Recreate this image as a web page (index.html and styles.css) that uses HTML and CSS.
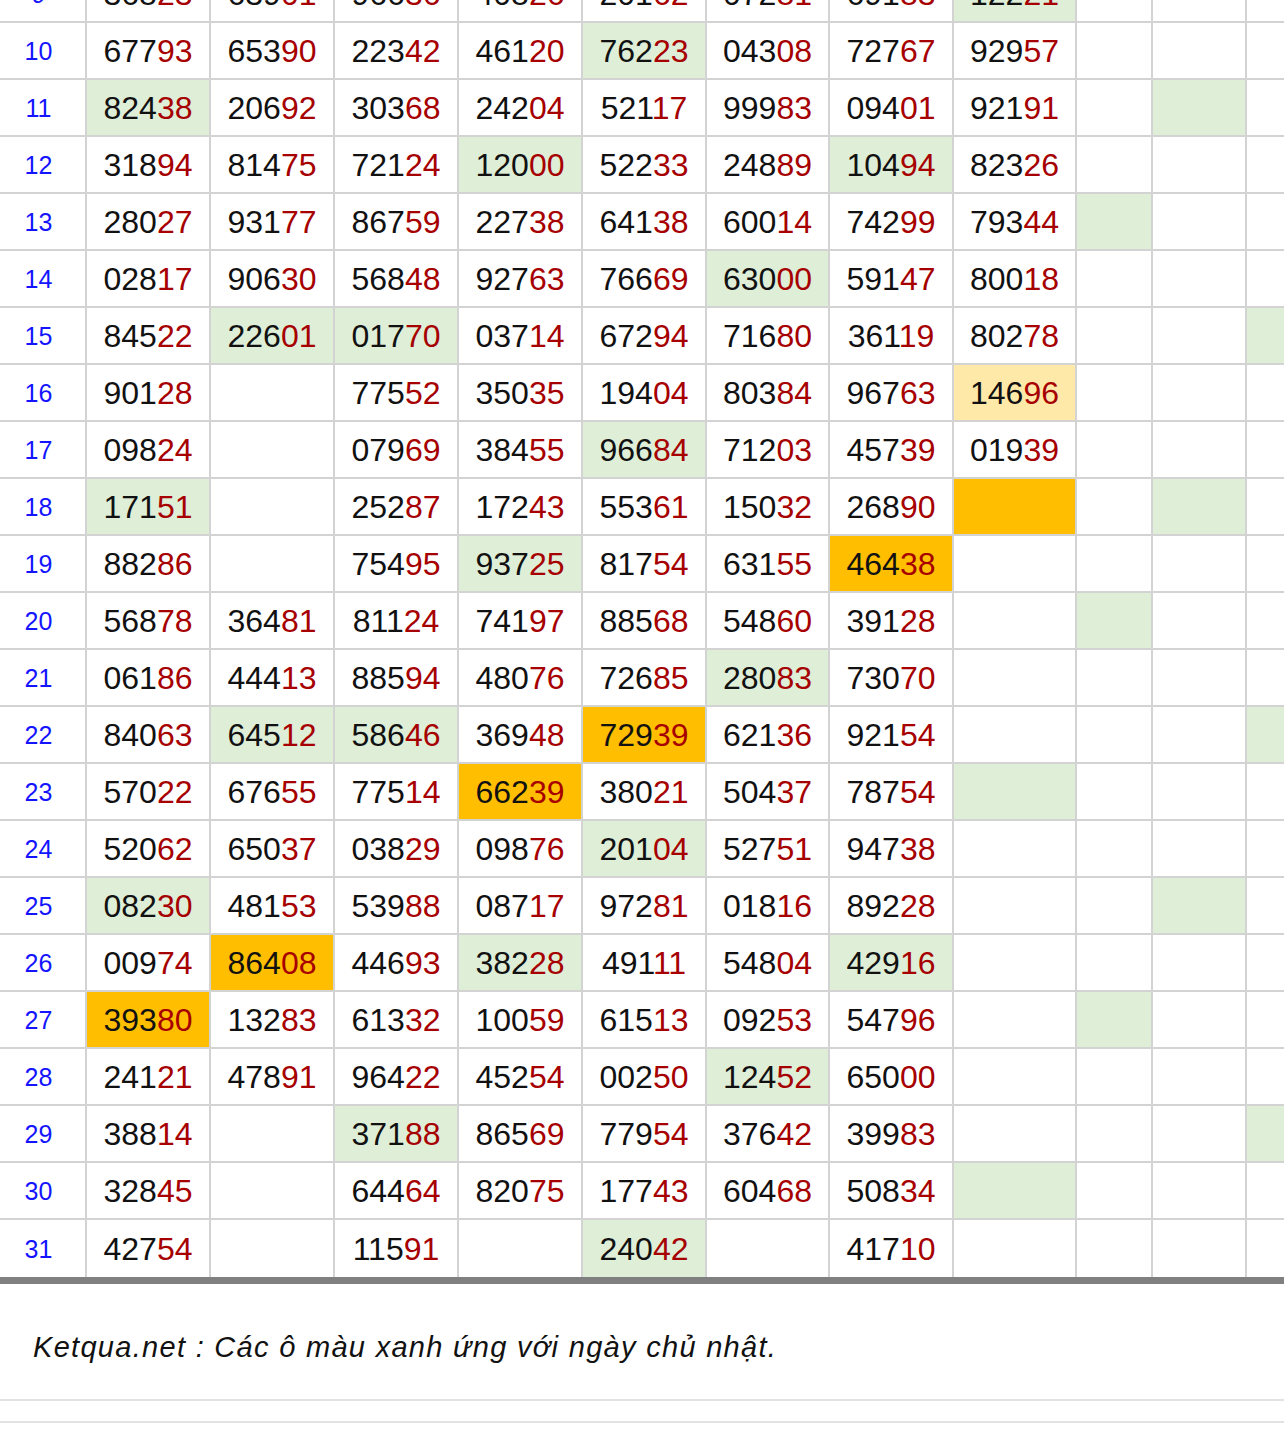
FILE: index.html
```html
<!DOCTYPE html>
<html lang="vi">
<head>
<meta charset="utf-8">
<title>Ketqua.net</title>
<link rel="stylesheet" href="styles.css">
</head>
<body>
<div class="wrap">
<table class="kq">
<colgroup>
<col class="w-day"><col class="w124"><col class="w124"><col class="w124"><col class="w124"><col class="w124"><col class="w123"><col class="w124"><col class="w123"><col class="w76"><col class="w94"><col class="w124">
</colgroup>
<tbody>
<tr><td class="d">9</td><td>368<span class="r">23</span></td><td>639<span class="r">01</span></td><td>966<span class="r">36</span></td><td>408<span class="r">26</span></td><td>201<span class="r">62</span></td><td>072<span class="r">81</span></td><td>691<span class="r">83</span></td><td class="g">122<span class="r">21</span></td><td></td><td></td><td></td></tr>
<tr><td class="d">10</td><td>677<span class="r">93</span></td><td>653<span class="r">90</span></td><td>223<span class="r">42</span></td><td>461<span class="r">20</span></td><td class="g">762<span class="r">23</span></td><td>043<span class="r">08</span></td><td>727<span class="r">67</span></td><td>929<span class="r">57</span></td><td></td><td></td><td></td></tr>
<tr><td class="d">11</td><td class="g">824<span class="r">38</span></td><td>206<span class="r">92</span></td><td>303<span class="r">68</span></td><td>242<span class="r">04</span></td><td>521<span class="r">17</span></td><td>999<span class="r">83</span></td><td>094<span class="r">01</span></td><td>921<span class="r">91</span></td><td></td><td class="g"></td><td></td></tr>
<tr><td class="d">12</td><td>318<span class="r">94</span></td><td>814<span class="r">75</span></td><td>721<span class="r">24</span></td><td class="g">120<span class="r">00</span></td><td>522<span class="r">33</span></td><td>248<span class="r">89</span></td><td class="g">104<span class="r">94</span></td><td>823<span class="r">26</span></td><td></td><td></td><td></td></tr>
<tr><td class="d">13</td><td>280<span class="r">27</span></td><td>931<span class="r">77</span></td><td>867<span class="r">59</span></td><td>227<span class="r">38</span></td><td>641<span class="r">38</span></td><td>600<span class="r">14</span></td><td>742<span class="r">99</span></td><td>793<span class="r">44</span></td><td class="g"></td><td></td><td></td></tr>
<tr><td class="d">14</td><td>028<span class="r">17</span></td><td>906<span class="r">30</span></td><td>568<span class="r">48</span></td><td>927<span class="r">63</span></td><td>766<span class="r">69</span></td><td class="g">630<span class="r">00</span></td><td>591<span class="r">47</span></td><td>800<span class="r">18</span></td><td></td><td></td><td></td></tr>
<tr><td class="d">15</td><td>845<span class="r">22</span></td><td class="g">226<span class="r">01</span></td><td class="g">017<span class="r">70</span></td><td>037<span class="r">14</span></td><td>672<span class="r">94</span></td><td>716<span class="r">80</span></td><td>361<span class="r">19</span></td><td>802<span class="r">78</span></td><td></td><td></td><td class="g"></td></tr>
<tr><td class="d">16</td><td>901<span class="r">28</span></td><td></td><td>775<span class="r">52</span></td><td>350<span class="r">35</span></td><td>194<span class="r">04</span></td><td>803<span class="r">84</span></td><td>967<span class="r">63</span></td><td class="y">146<span class="r">96</span></td><td></td><td></td><td></td></tr>
<tr><td class="d">17</td><td>098<span class="r">24</span></td><td></td><td>079<span class="r">69</span></td><td>384<span class="r">55</span></td><td class="g">966<span class="r">84</span></td><td>712<span class="r">03</span></td><td>457<span class="r">39</span></td><td>019<span class="r">39</span></td><td></td><td></td><td></td></tr>
<tr><td class="d">18</td><td class="g">171<span class="r">51</span></td><td></td><td>252<span class="r">87</span></td><td>172<span class="r">43</span></td><td>553<span class="r">61</span></td><td>150<span class="r">32</span></td><td>268<span class="r">90</span></td><td class="o"></td><td></td><td class="g"></td><td></td></tr>
<tr><td class="d">19</td><td>882<span class="r">86</span></td><td></td><td>754<span class="r">95</span></td><td class="g">937<span class="r">25</span></td><td>817<span class="r">54</span></td><td>631<span class="r">55</span></td><td class="o">464<span class="r">38</span></td><td></td><td></td><td></td><td></td></tr>
<tr><td class="d">20</td><td>568<span class="r">78</span></td><td>364<span class="r">81</span></td><td>811<span class="r">24</span></td><td>741<span class="r">97</span></td><td>885<span class="r">68</span></td><td>548<span class="r">60</span></td><td>391<span class="r">28</span></td><td></td><td class="g"></td><td></td><td></td></tr>
<tr><td class="d">21</td><td>061<span class="r">86</span></td><td>444<span class="r">13</span></td><td>885<span class="r">94</span></td><td>480<span class="r">76</span></td><td>726<span class="r">85</span></td><td class="g">280<span class="r">83</span></td><td>730<span class="r">70</span></td><td></td><td></td><td></td><td></td></tr>
<tr><td class="d">22</td><td>840<span class="r">63</span></td><td class="g">645<span class="r">12</span></td><td class="g">586<span class="r">46</span></td><td>369<span class="r">48</span></td><td class="o">729<span class="r">39</span></td><td>621<span class="r">36</span></td><td>921<span class="r">54</span></td><td></td><td></td><td></td><td class="g"></td></tr>
<tr><td class="d">23</td><td>570<span class="r">22</span></td><td>676<span class="r">55</span></td><td>775<span class="r">14</span></td><td class="o">662<span class="r">39</span></td><td>380<span class="r">21</span></td><td>504<span class="r">37</span></td><td>787<span class="r">54</span></td><td class="g"></td><td></td><td></td><td></td></tr>
<tr><td class="d">24</td><td>520<span class="r">62</span></td><td>650<span class="r">37</span></td><td>038<span class="r">29</span></td><td>098<span class="r">76</span></td><td class="g">201<span class="r">04</span></td><td>527<span class="r">51</span></td><td>947<span class="r">38</span></td><td></td><td></td><td></td><td></td></tr>
<tr><td class="d">25</td><td class="g">082<span class="r">30</span></td><td>481<span class="r">53</span></td><td>539<span class="r">88</span></td><td>087<span class="r">17</span></td><td>972<span class="r">81</span></td><td>018<span class="r">16</span></td><td>892<span class="r">28</span></td><td></td><td></td><td class="g"></td><td></td></tr>
<tr><td class="d">26</td><td>009<span class="r">74</span></td><td class="o">864<span class="r">08</span></td><td>446<span class="r">93</span></td><td class="g">382<span class="r">28</span></td><td>491<span class="r">11</span></td><td>548<span class="r">04</span></td><td class="g">429<span class="r">16</span></td><td></td><td></td><td></td><td></td></tr>
<tr><td class="d">27</td><td class="o">393<span class="r">80</span></td><td>132<span class="r">83</span></td><td>613<span class="r">32</span></td><td>100<span class="r">59</span></td><td>615<span class="r">13</span></td><td>092<span class="r">53</span></td><td>547<span class="r">96</span></td><td></td><td class="g"></td><td></td><td></td></tr>
<tr><td class="d">28</td><td>241<span class="r">21</span></td><td>478<span class="r">91</span></td><td>964<span class="r">22</span></td><td>452<span class="r">54</span></td><td>002<span class="r">50</span></td><td class="g">124<span class="r">52</span></td><td>650<span class="r">00</span></td><td></td><td></td><td></td><td></td></tr>
<tr><td class="d">29</td><td>388<span class="r">14</span></td><td></td><td class="g">371<span class="r">88</span></td><td>865<span class="r">69</span></td><td>779<span class="r">54</span></td><td>376<span class="r">42</span></td><td>399<span class="r">83</span></td><td></td><td></td><td></td><td class="g"></td></tr>
<tr><td class="d">30</td><td>328<span class="r">45</span></td><td></td><td>644<span class="r">64</span></td><td>820<span class="r">75</span></td><td>177<span class="r">43</span></td><td>604<span class="r">68</span></td><td>508<span class="r">34</span></td><td class="g"></td><td></td><td></td><td></td></tr>
<tr class="last"><td class="d">31</td><td>427<span class="r">54</span></td><td></td><td>115<span class="r">91</span></td><td></td><td class="g">240<span class="r">42</span></td><td></td><td>417<span class="r">10</span></td><td></td><td></td><td></td><td></td></tr>
</tbody>
</table>
</div>
<div class="rule"></div>
<div class="note">Ketqua.net : Các ô màu xanh ứng với ngày chủ nhật.</div>
<div class="spacer"></div>
</body>
</html>
```
FILE: styles.css
```css
html, body {
  margin: 0;
  padding: 0;
  background: #ffffff;
  overflow: hidden;
}
body {
  font-family: "Liberation Sans", Arial, Helvetica, sans-serif;
  color: #000;
}
.wrap {
  width: 100%;
  overflow: hidden;
  margin-top: -34px;
}
.kq {
  table-layout: fixed;
  border-collapse: separate;
  border-spacing: 0;
  width: 1371px;
}
.w-day { width: 87px; }
.w124 { width: 124px; }
.w123 { width: 123px; }
.w76 { width: 76px; }
.w94 { width: 94px; }
.kq tr {
  height: 57px;
}
.kq td {
  padding: 0;
  border-right: 2px solid #d3d3d3;
  border-bottom: 2px solid #d3d3d3;
  text-align: center;
  vertical-align: middle;
  font-size: 32px;
  line-height: 36px;
  color: #111;
  white-space: nowrap;
  overflow: hidden;
}
.kq tr.last td {
  border-bottom: 0;
}
.kq td.d {
  color: #1414ff;
  font-size: 25px;
  padding-right: 8px;
}
.kq .r {
  color: #a60000;
}
.kq td.g { background: #dfeed7; }
.kq td.y { background: #ffe9a8; }
.kq td.o { background: #ffbf00; }
.rule {
  height: 7px;
  background: #808080;
}
.note {
  padding: 43px 0 32px 33px;
  font-size: 29px;
  letter-spacing: 1.3px;
  line-height: 40px;
  font-style: italic;
  color: #111;
  border-bottom: 2px solid #e2e2e2;
}
.spacer {
  height: 20px;
  border-bottom: 2px solid #e2e2e2;
}
```
